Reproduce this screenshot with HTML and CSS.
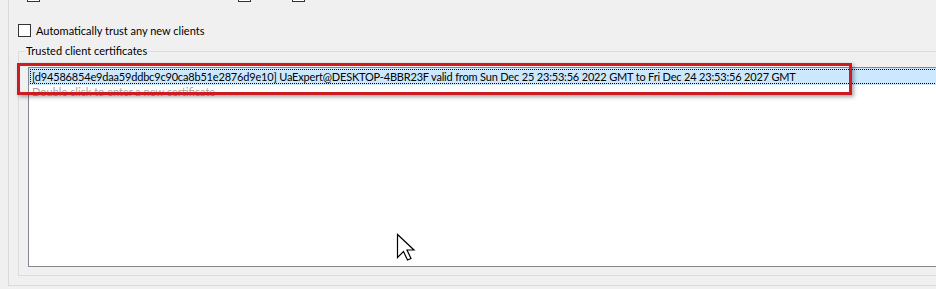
FILE: index.html
```html
<!DOCTYPE html>
<html>
<head>
<meta charset="utf-8">
<link rel="stylesheet" href="styles.css">
</head>
<body>
<div class="panel">
  <div class="toprow">
    <span class="cb cb1"></span>
    <span class="cb cb2"></span>
    <span class="cb cb3"></span>
  </div>
  <label class="trust"><span class="cb"></span><span>Automatically trust any new clients</span></label>
  <fieldset class="group">
    <legend>Trusted client certificates</legend>
    <div class="list">
      <div class="row selected">[d94586854e9daa59ddbc9c90ca8b51e2876d9e10] UaExpert@DESKTOP-4BBR23F valid from Sun Dec 25 23:53:56 2022 GMT to Fri Dec 24 23:53:56 2027 GMT</div>
      <div class="row hint">Double click to enter a new certificate</div>
    </div>
  </fieldset>
</div>
<div class="highlight"></div>
<svg class="cursor" width="20" height="30" viewBox="0 0 20 30">
  <polygon points="1.5,1.5 1.5,24.5 7.5,18.5 11.5,27 15,25.5 11,17 18,17" fill="#fff" stroke="#000" stroke-width="1.2" stroke-linejoin="miter"/>
</svg>
</body>
</html>
```

FILE: styles.css
```css
html, body {
  margin: 0;
  padding: 0;
  width: 936px;
  height: 289px;
  overflow: hidden;
  background: #f0f0f0;
  font-family: Lato, "Noto Sans", sans-serif;
  font-size: 11px;
  color: #000;
}

.panel {
  position: relative;
  box-sizing: border-box;
  margin-left: 8px;
  width: 928px;
  height: 286px;
  border-left: 1px solid #d9d9d9;
  border-bottom: 1px solid #d9d9d9;
  padding-left: 9px;
  overflow: hidden;
}

.toprow {
  display: flex;
  height: 13px;
  margin-top: -11px;
}

.cb {
  display: block;
  box-sizing: border-box;
  width: 13px;
  height: 13px;
  border: 1px solid #333;
  background: #fff;
  flex: none;
}

.cb1 { margin-left: 9px; }
.cb2 { margin-left: 198px; }
.cb3 { margin-left: 41px; }

.trust {
  display: flex;
  align-items: center;
  gap: 5px;
  margin-top: 21px;
  height: 15px;
  line-height: 15px;
}

.group {
  margin: 5px 0 0 0;
  padding: 0 6px 8px 6px;
  border: 1px solid #dcdcdc;
  width: 1100px;
  box-sizing: border-box;
}

.group legend {
  padding: 0 1px;
  margin-left: 0;
  line-height: 16px;
  height: 16px;
}

.list {
  margin: 8px 0 0 3px;
  box-sizing: border-box;
  height: 200px;
  border: 1px solid #828790;
  background: #fff;
}

.row {
  box-sizing: border-box;
  height: 17px;
  line-height: 17px;
  padding-left: 3px;
  white-space: nowrap;
}

.selected {
  background: #cce8ff;
  outline: 1px dotted #000;
  outline-offset: -2px;
  letter-spacing: -0.18px;
}

.hint {
  color: #a6a6a6;
  line-height: 14px;
  height: 14px;
}

.highlight {
  position: absolute;
  left: 17px;
  top: 63px;
  width: 835px;
  height: 32px;
  box-sizing: border-box;
  border: 3px solid #cc1b22;
  box-shadow: 2px 2px 4px rgba(0, 0, 0, 0.35);
}

.cursor {
  position: absolute;
  left: 396px;
  top: 233px;
}
```
